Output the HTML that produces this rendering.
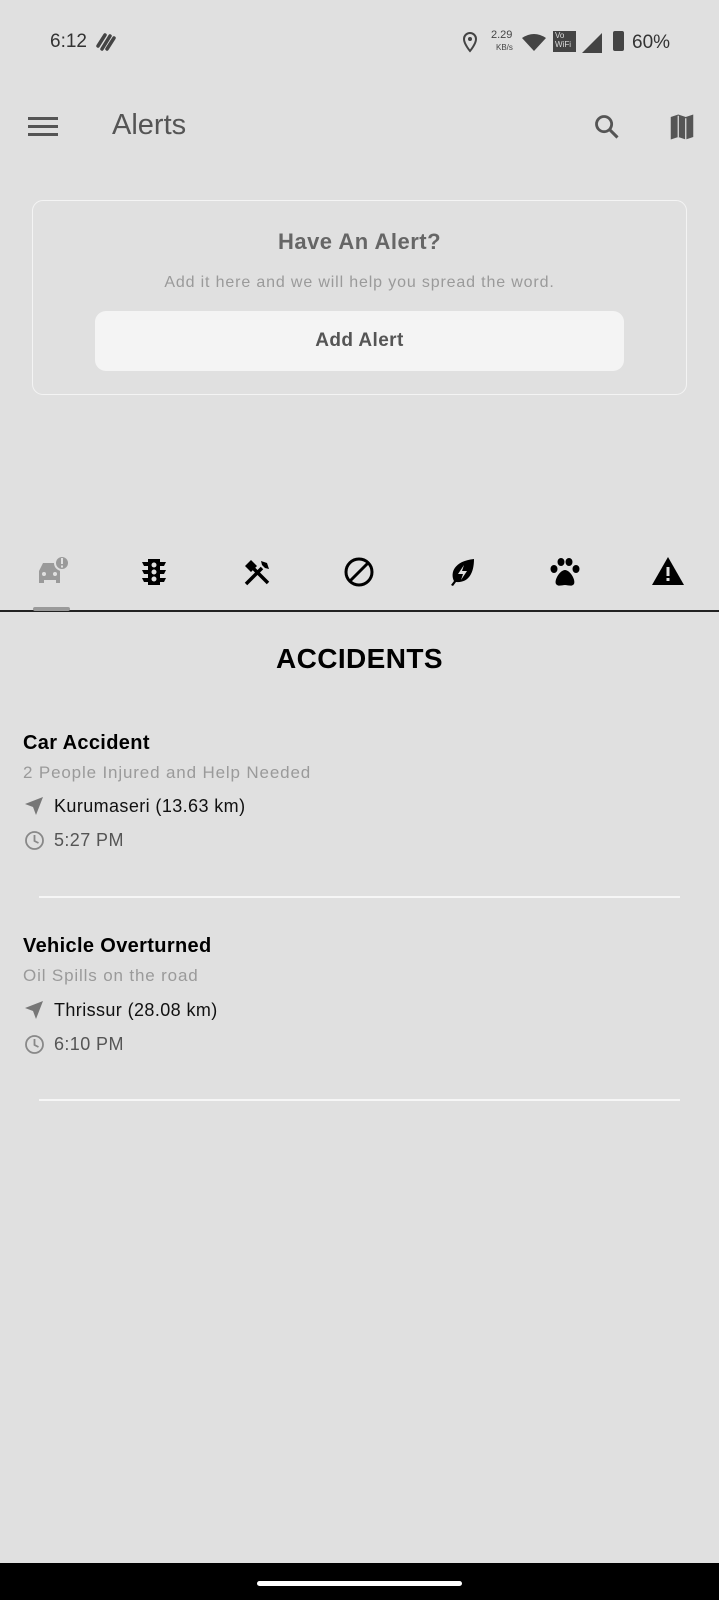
<!DOCTYPE html><html><head><meta charset="utf-8"><style>
body{margin:0;width:719px;height:1600px;background:#e0e0e0;font-family:"Liberation Sans",sans-serif;position:relative;overflow:hidden}
.a{position:absolute}
.t{position:absolute;white-space:nowrap;line-height:1}
</style></head><body>
<div class="t" style="left:50px;top:32px;font-size:19px;color:#333">6:12</div>
<svg class="a" style="left:95px;top:32px" width="22" height="20" viewBox="0 0 22 20"><path d="M3 14 L10 3 M7 17 L15 4 M12 17 L19 6" stroke="#444" stroke-width="3.5" stroke-linecap="round"/></svg>
<svg class="a" style="left:462px;top:31px" width="16" height="22" viewBox="0 0 16 22"><path d="M8 2a6 6 0 0 1 6 6c0 5-6 12-6 12S2 13 2 8a6 6 0 0 1 6-6z" fill="none" stroke="#444" stroke-width="2"/><circle cx="8" cy="8" r="2" fill="#444"/></svg>
<div class="t" style="left:491px;top:30px;font-size:11px;color:#444">2.29</div>
<div class="t" style="left:496px;top:44px;font-size:8px;color:#444">KB/s</div>
<svg class="a" style="left:522px;top:33px" width="24" height="18" viewBox="0 0 24 18"><path d="M0 5 Q12 -3 24 5 L12 18z" fill="#444"/></svg>
<div class="a" style="left:553px;top:31px;width:23px;height:21px;background:#444;color:#ddd;font-size:8px;line-height:9px;padding-left:2px;box-sizing:border-box">Vo<br>WiFi</div>
<svg class="a" style="left:582px;top:33px" width="20" height="20"><path d="M20 0V20H0z" fill="#444"/></svg>
<div class="a" style="left:613px;top:31px;width:11px;height:20px;background:#444;border-radius:2px"></div>
<div class="t" style="left:632px;top:33px;font-size:19px;color:#333">60%</div>

<svg class="a" style="left:28px;top:116px" width="30" height="22"><rect y="1" width="30" height="3" fill="#555"/><rect y="9" width="30" height="3" fill="#555"/><rect y="17" width="30" height="3" fill="#555"/></svg>
<div class="t" style="left:112px;top:111px;font-size:29px;color:#555">Alerts</div>
<svg class="a" style="left:593px;top:113px" width="28" height="28" viewBox="0 0 24 24"><circle cx="9.5" cy="9.5" r="6.5" fill="none" stroke="#555" stroke-width="2.4"/><path d="M14 14l7 7" stroke="#555" stroke-width="2.6"/></svg>
<svg class="a" style="left:667px;top:112px" width="30" height="30" viewBox="0 0 24 24"><path d="M3 4l6-2 6 2 6-2v18l-6 2-6-2-6 2z" fill="#555"/><path d="M9 3v17M15 5v17" stroke="#e0e0e0" stroke-width="1"/></svg>

<div class="a" style="left:32px;top:200px;width:655px;height:195px;border:1.5px solid #f4f4f4;border-radius:11px;box-sizing:border-box"></div>
<div class="t" style="left:0;width:719px;text-align:center;top:231px;font-size:22px;font-weight:bold;color:#666;letter-spacing:0.5px">Have An Alert?</div>
<div class="t" style="left:0;width:719px;text-align:center;top:275px;font-size:16px;color:#9a9a9a;letter-spacing:0.85px">Add it here and we will help you spread the word.</div>
<div class="a" style="left:95px;top:311px;width:529px;height:60px;background:#f4f4f4;border-radius:11px;text-align:center;line-height:60px;font-size:19px;font-weight:bold;color:#555;letter-spacing:0.4px">Add Alert</div>

<svg class="a" style="left:36px;top:555px" width="34" height="32" viewBox="0 0 34 32"><path d="M3 16l4-8h14l3 8v12h-4v-3H8v3H3z" fill="#9a9a9a"/><circle cx="26" cy="8" r="7" fill="#9a9a9a" stroke="#e0e0e0" stroke-width="2"/><rect x="25" y="3" width="2" height="6" fill="#e0e0e0"/><rect x="25" y="10.5" width="2" height="2" fill="#e0e0e0"/><circle cx="8" cy="19" r="2" fill="#e0e0e0"/><circle cx="19" cy="19" r="2" fill="#e0e0e0"/></svg>
<svg class="a" style="left:140px;top:557px" width="28" height="30" viewBox="0 0 28 30"><path d="M8 2h12v26H8z M2 5h6l-0 4H4z M2 13h6v4H4z M2 21h6v4H4z M26 5h-6v4h4z M26 13h-6v4h4z M26 21h-6v4h4z" fill="#000"/><circle cx="14" cy="8" r="2.5" fill="#e0e0e0"/><circle cx="14" cy="15" r="2.5" fill="#e0e0e0"/><circle cx="14" cy="22" r="2.5" fill="#e0e0e0"/></svg>
<svg class="a" style="left:242px;top:557px" width="30" height="30" viewBox="0 0 30 30"><path d="M4 27L20 11M11 11L26 26" stroke="#000" stroke-width="3.5"/><path d="M3 9l6-6 6 6-6 6z M19 4l6 2 2 6-4-1-3-3z" fill="#000"/></svg>
<svg class="a" style="left:343px;top:556px" width="32" height="32" viewBox="0 0 32 32"><circle cx="16" cy="16" r="13" fill="none" stroke="#000" stroke-width="3"/><path d="M7 25L25 7" stroke="#000" stroke-width="3"/></svg>
<svg class="a" style="left:447px;top:556px" width="30" height="32" viewBox="0 0 30 32"><path d="M4 29l3-4c-4-8 0-20 20-22 0 15-6 24-18 23l-3 4z" fill="#000"/><path d="M17 9l-6 9h5l-2 6 6-9h-5z" fill="#e0e0e0"/></svg>
<svg class="a" style="left:549px;top:557px" width="32" height="30" viewBox="0 0 32 30"><ellipse cx="5" cy="12" rx="3.5" ry="4" fill="#000"/><ellipse cx="12" cy="5" rx="3.5" ry="4" fill="#000"/><ellipse cx="20" cy="5" rx="3.5" ry="4" fill="#000"/><ellipse cx="27" cy="12" rx="3.5" ry="4" fill="#000"/><path d="M16 13c-5 0-11 10-9 14 2 3 6 1 9 1s7 2 9-1c2-4-4-14-9-14z" fill="#000"/></svg>
<svg class="a" style="left:651px;top:556px" width="34" height="30" viewBox="0 0 34 30"><path d="M17 1L33 29H1z" fill="#000"/><rect x="15.5" y="11" width="3" height="9" fill="#e0e0e0"/><rect x="15.5" y="22" width="3" height="3" fill="#e0e0e0"/></svg>
<div class="a" style="left:0;top:610px;width:719px;height:2px;background:#222"></div>
<div class="a" style="left:33px;top:607px;width:37px;height:4px;background:#9a9a9a;border-radius:2px"></div>

<div class="t" style="left:0;width:719px;text-align:center;top:645px;font-size:28px;font-weight:bold;color:#000;letter-spacing:0.4px">ACCIDENTS</div>

<div class="t" style="left:23px;top:733px;font-size:20px;font-weight:bold;color:#000;letter-spacing:0.35px">Car Accident</div>
<div class="t" style="left:23px;top:764px;font-size:17px;color:#9a9a9a;letter-spacing:0.85px">2 People Injured and Help Needed</div>
<svg class="a" style="left:24px;top:796px" width="20" height="20" viewBox="0 0 20 20"><path d="M19 1L1 8l8 3 3 8z" fill="#777"/></svg>
<div class="t" style="left:54px;top:797px;font-size:18px;color:#111;letter-spacing:0.4px">Kurumaseri (13.63 km)</div>
<svg class="a" style="left:24px;top:830px" width="21" height="21" viewBox="0 0 21 21"><circle cx="10.5" cy="10.5" r="8.5" fill="none" stroke="#888" stroke-width="1.8"/><path d="M10.5 5v6l4 2" fill="none" stroke="#888" stroke-width="1.8"/></svg>
<div class="t" style="left:54px;top:831px;font-size:18px;color:#555;letter-spacing:0.4px">5:27 PM</div>
<div class="a" style="left:39px;top:896px;width:641px;height:2px;background:#f6f6f6"></div>

<div class="t" style="left:23px;top:936px;font-size:20px;font-weight:bold;color:#000;letter-spacing:0.35px">Vehicle Overturned</div>
<div class="t" style="left:23px;top:967px;font-size:17px;color:#9a9a9a;letter-spacing:0.85px">Oil Spills on the road</div>
<svg class="a" style="left:24px;top:1000px" width="20" height="20" viewBox="0 0 20 20"><path d="M19 1L1 8l8 3 3 8z" fill="#777"/></svg>
<div class="t" style="left:54px;top:1001px;font-size:18px;color:#111;letter-spacing:0.4px">Thrissur (28.08 km)</div>
<svg class="a" style="left:24px;top:1034px" width="21" height="21" viewBox="0 0 21 21"><circle cx="10.5" cy="10.5" r="8.5" fill="none" stroke="#888" stroke-width="1.8"/><path d="M10.5 5v6l4 2" fill="none" stroke="#888" stroke-width="1.8"/></svg>
<div class="t" style="left:54px;top:1035px;font-size:18px;color:#555;letter-spacing:0.4px">6:10 PM</div>
<div class="a" style="left:39px;top:1099px;width:641px;height:2px;background:#f6f6f6"></div>

<div class="a" style="left:0;top:1563px;width:719px;height:37px;background:#000"></div>
<div class="a" style="left:257px;top:1581px;width:205px;height:5px;background:#fff;border-radius:3px"></div>
</body></html>
